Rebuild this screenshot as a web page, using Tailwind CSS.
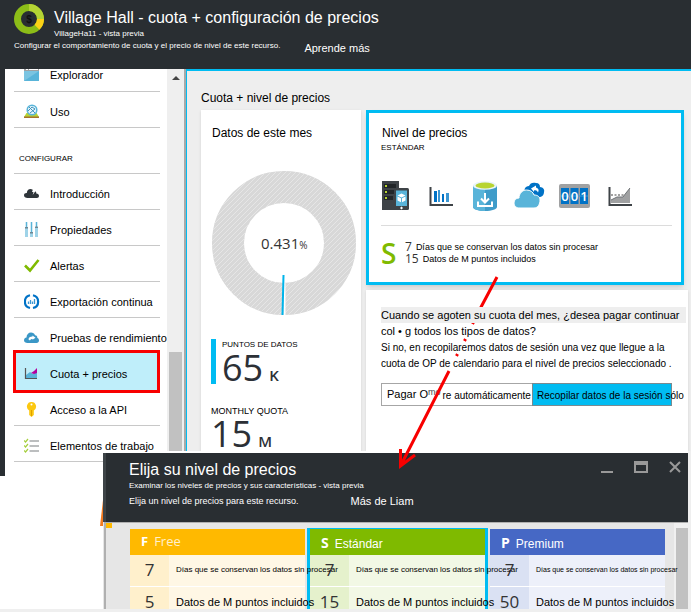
<!DOCTYPE html>
<html lang="es">
<head>
<meta charset="utf-8">
<title>Village Hall - cuota + configuración de precios</title>
<script src="https://cdn.jsdelivr.net/npm/@tailwindcss/browser@4"></script>
</head>
<body class="bg-white font-['Liberation_Sans',Arial,sans-serif] text-black">
<div class="relative flex min-h-screen flex-col overflow-hidden border-b-3 border-[#efefef]">

  <header class="flex h-[69px] items-start bg-[#292e32] pl-3.5 text-white">
    <div>
      <div class="flex gap-2.5">
        <svg class="mt-1 h-[30px] w-[30px]" viewBox="0 0 30 30" fill="none" stroke-width="7">
          <circle cx="15" cy="15" r="11.5" stroke="#8cbd18"/>
          <path d="M15 3.500A11.500 11.500 0 0 1 26.500 15" stroke="#b4d334"/>
          <path d="M26.500 15A11.500 11.500 0 0 1 23 23.300" stroke="#fcd116"/>
          <text x="15" y="18.500" text-anchor="middle" font-size="10" font-weight="700" fill="#111" stroke="none">$</text>
        </svg>
        <div>
          <h1 class="pt-2 text-[16px] leading-5 whitespace-nowrap">Village Hall - cuota + configuración de precios</h1>
          <p class="text-[8px] leading-3">VillageHa11 - vista previa</p>
        </div>
      </div>
      <div class="flex items-start">
        <p class="text-[8px] leading-3 whitespace-nowrap">Configurar el comportamiento de cuota y el precio de nivel de este recurso.</p>
        <a href="#" class="ml-6 text-[11px] leading-4 whitespace-nowrap">Aprende más</a>
      </div>
    </div>
  </header>

  <div class="flex items-start">
    <aside class="flex h-[407px] w-[187px] shrink-0 border-l-5 border-[#292e32]">
      <nav class="w-[162px] overflow-hidden pr-[7px] pl-[9px] text-[11px] leading-4 whitespace-nowrap">
        <a href="#" class="-mt-[13px] flex h-9 items-center gap-2.5 border-b border-[#c8c8c8] pt-0.5 pl-2.5">
          <svg class="h-4 w-4" viewBox="0 0 16 16"><path d="M0 0h15v14H0z" fill="#59b4d9"/><path d="M0 0h15v4H0z" fill="#a0a1a2"/><path d="M2 1h2v2H2zM5 1h9v2H5z" fill="#fff"/><path d="M0 4h15L0 14z" fill="#7bc4e1"/></svg>
          Explorador</a>
        <a href="#" class="flex h-9 items-center gap-2.5 border-b border-[#c8c8c8] pt-1 pl-2.5">
          <svg class="h-4 w-4" viewBox="0 0 16 16"><path d="M2.500 9h10L15 13H0z" fill="#b8d432"/><path d="M0 12.500h15V14H0z" fill="#a5752c"/><circle cx="8" cy="6" r="4.800" fill="#e6f4fa" stroke="#59b4d9" stroke-width="1.500"/><path d="M5 3l6 6M4 7l4-4 3 2-5 4" fill="none" stroke="#3f93bb"/></svg>
          Uso</a>
        <h2 class="flex h-[46px] items-end border-b border-[#c8c8c8] pb-2 pl-[5px] text-[8px] leading-3">CONFIGURAR</h2>
        <a href="#" class="flex h-9 items-center gap-2.5 border-b border-[#c8c8c8] pt-1 pl-2.5">
          <svg class="h-4 w-4" viewBox="0 0 16 16"><path d="M3.500 12C1.500 12 0 11 0 9.300 0 7.700 1.400 6.800 2.800 7 3 4.500 4.500 3 6.500 3 8 3 9 3.800 9.500 5c2.500-.3 3 1.500 2.800 2.500C14 7.500 15 8.500 15 10c0 1.200-1 2-2 2z" fill="#2f353a"/><path d="M9.500 2L8 6h1.500l-.8 3 2.800-4H10l1-3z" fill="#fff"/></svg>
          Introducción</a>
        <a href="#" class="flex h-9 items-center gap-2.5 border-b border-[#c8c8c8] pt-1 pl-2.5">
          <svg class="h-4 w-4" viewBox="0 0 16 16"><path d="M1 6h3v9H1zM6 10h3v5H6zM11 6h3v9h-3z" fill="#9fd3e8"/><path d="M1 0h3v5H1zM6 0h3v10H6zM11 0h3v4h-3z" fill="#d3ebf5"/><path d="M2 0h1v6H2zM7 0h1v10H7zM12 0h1v5h-1z" fill="#59b4d9"/><path d="M1 5h3v1.500H1zM6 10h3v1.500H6zM11 4.500h3V6h-3z" fill="#6d8793"/></svg>
          Propiedades</a>
        <a href="#" class="flex h-9 items-center gap-2.5 border-b border-[#c8c8c8] pt-1 pl-2.5">
          <svg class="h-4 w-4" viewBox="0 0 16 16"><path d="M1 7.500L6 12.500 14.500 2" fill="none" stroke="#7fba00" stroke-width="2.600"/></svg>
          Alertas</a>
        <a href="#" class="flex h-9 items-center gap-2.5 border-b border-[#c8c8c8] pt-1 pl-2.5">
          <svg class="h-4 w-4" viewBox="0 0 16 16" fill="none" stroke="#0072c6"><path d="M6 1.300A6.500 6.500 0 0 0 6 14M9 1.300A6.500 6.500 0 0 1 9 14" stroke-width="2.200"/><path d="M4.500 7.500v2.500M6.500 6v4M8.500 7.500v2.500M10.500 5v5" stroke="#3b97d3" stroke-width="1.300"/></svg>
          Exportación continua</a>
        <a href="#" class="flex h-9 items-center gap-2.5 border-b border-[#c8c8c8] pt-1 pl-2.5">
          <svg class="h-4 w-4 shrink-0" viewBox="0 0 16 16"><path d="M3.500 13C1.500 13 0 12 0 10.300 0 8.700 1.200 7.600 2.500 7.500 2.500 4.500 4.500 2.500 7 2.500c2 0 3.500 1 4 2.700 2 0 2.500 1.500 2.300 2.800C14.500 8.300 15 9.300 15 10.500c0 1.500-1 2.500-2.500 2.500z" fill="#3b97c6"/><path d="M4.500 9.500c0-2 1.500-3 4-3V5.500l3 2.300-3 2V9C7 9 6.500 9.500 6 10.500z" fill="#fff"/></svg>
          Pruebas de rendimiento</a>
        <a href="#" aria-current="page" class="relative -mt-1 -mb-[3px] -ml-px flex h-[43px] items-center gap-2.5 border-3 border-[#f80000] bg-[#bfeefa] pt-1 pl-2">
          <svg class="h-4 w-4" viewBox="0 0 16 16"><path d="M2 12V9l4-3 3 2 4-2v6z" fill="#59b4d9"/><path d="M7 7l3-2 3-3v5l-3 1z" fill="#b4009e"/><path d="M1.500 2v10.500H13" fill="none" stroke="#555" stroke-width="1.200"/></svg>
          Cuota + precios</a>
        <a href="#" class="flex h-9 items-center gap-2.5 border-b border-[#c8c8c8] pt-1 pl-2.5">
          <svg class="h-4 w-4" viewBox="0 0 16 16"><path d="M7.500 0a4.500 4.500 0 0 1 2.300 8.400V13l-2.300 2-2.300-2V8.400A4.500 4.500 0 0 1 7.500 0z" fill="#fcc810"/><circle cx="7.500" cy="2.500" r="1" fill="#fff"/><path d="M7.500 8v6" stroke="#dfa000"/></svg>
          Acceso a la API</a>
        <a href="#" class="flex h-9 items-center gap-2.5 border-b border-[#c8c8c8] pt-1 pl-2.5">
          <svg class="h-4 w-4" viewBox="0 0 16 16" fill="none"><path d="M5.500 3H15M5.500 8H15M5.500 13H15" stroke="#a6a9ab" stroke-width="1.300"/><path d="M0 2.500l1.500 1.500L4 1M0 7.500L1.500 9 4 6M0 12.500L1.500 14 4 11" stroke="#a5cf3d" stroke-width="1.200"/></svg>
          Elementos de trabajo</a>
      </nav>
      <div class="flex h-[382px] w-[17px] flex-col items-center bg-[#efefef]">
        <svg class="mt-1.5 h-1.5 w-2" viewBox="0 0 8 6"><path d="M0 5L4 1l4 4z" fill="#444"/></svg>
        <div class="mt-[271px] w-[13px] flex-1 bg-[#c1c1c1]"></div>
      </div>
      <div class="h-[382px] w-0.5 bg-[#a9a9a9]"></div>
      <div class="h-[382px] w-px bg-[#00bcf2]"></div>
    </aside>

    <main class="flex h-[382px] min-w-0 flex-1 flex-col overflow-hidden border-t-2 border-[#00bcf2] bg-[#eee] pr-[3px] pl-3.5">
      <h2 class="mt-[19px] mb-1 text-[12px] leading-4">Cuota + nivel de precios</h2>
      <div class="flex min-h-0 flex-1 gap-[5px]">
        <section class="w-40 shrink-0 bg-white px-2.5 shadow">
          <h3 class="pt-[15px] pl-px text-[12px] leading-4">Datos de este mes</h3>
          <svg class="mt-[30px] ml-px h-36 w-36" viewBox="0 0 144 144">
            <defs><pattern id="hatch" width="5" height="5" patternUnits="userSpaceOnUse"><path d="M-1 1l2-2M0 5L5 0M4 6l2-2" stroke="#e6e6e6"/></pattern></defs>
            <circle cx="72" cy="72" r="56" fill="none" stroke="#d8d8d8" stroke-width="32"/>
            <circle cx="72" cy="72" r="56" fill="none" stroke="url(#hatch)" stroke-width="32"/>
            <path d="M72.500 112v32" stroke="#fff" stroke-width="2"/>
            <path d="M71.500 104l-1 40" stroke="#00b4ea" stroke-width="2"/>
            <text x="49" y="78" font-family="Open Sans, sans-serif" font-size="15" font-weight="500" fill="#333">0.431<tspan font-size="10">%</tspan></text>
          </svg>
          <div class="mt-6 h-[45px] border-l-5 border-[#00bcf2] pl-1.5">
            <p class="text-[8px] leading-3">PUNTOS DE DATOS</p>
            <p class="flex items-baseline gap-1.5 font-['Open_Sans',sans-serif] text-[36px] leading-[34px] font-medium text-[#2c3036]">65 <span class="text-[15px] leading-4 font-semibold">K</span></p>
          </div>
          <div class="mt-[21px]">
            <p class="text-[9px] leading-3">MONTHLY QUOTA</p>
            <p class="flex items-baseline gap-1.5 font-['Open_Sans',sans-serif] text-[36px] leading-[34px] font-medium text-[#2c3036]">15 <span class="text-[15px] leading-4 font-semibold">M</span></p>
          </div>
        </section>

        <div class="flex min-w-0 flex-1 flex-col gap-[5px]">
          <section class="mr-1 h-[175px] shrink-0 border-3 border-[#00bcf2] bg-white pr-[9px] pl-3 shadow-md">
            <h3 class="pt-3 pl-px text-[12px] leading-4">Nivel de precios</h3>
            <p class="pt-px text-[8px] leading-3">ESTÁNDAR</p>
            <div class="mt-[26px] flex h-[31px] items-center">
              <svg class="h-[30px] w-[28px]" viewBox="0 0 28 30"><path d="M1 0h17v29H1z" fill="#3e4347"/><path d="M3 3h12v4H3zM3 9h12v4H3zM3 15h9v4H3z" fill="#222629"/><path d="M4 4h2v2H4zM4 10h2v2H4zM4 16h2v2H4z" fill="#b8d432"/><rect x="13" y="7" width="15" height="22" rx="1.500" fill="#3e4347"/><path d="M15 9.500h11V25H15z" fill="#59b4d9"/><path d="M20.500 12.500l4 2-4 2-4-2zM16.500 15.500l3.500 1.800v4l-3.500-1.800zM24.500 15.500L21 17.300v4l3.500-1.800z" fill="#fff"/><path d="M19 27h3M20.500 25.700v2.600" stroke="#fff"/></svg>
              <svg class="ml-5 h-[30px] w-[24px]" viewBox="0 0 24 30"><path d="M1.500 6v18H24" fill="none" stroke="#3e4347" stroke-width="2"/><path d="M5 10h3v11H5zM13 13h2v8h-2z" fill="#0072c6"/><path d="M9 9h2v12H9zM17 12h3v9h-3z" fill="#3b97d3"/></svg>
              <svg class="ml-5 h-[30px] w-[24px]" viewBox="0 0 24 30"><path d="M0 4v22c0 2 5 4 12 4s12-2 12-4V4z" fill="#3f9cc9"/><path d="M0 4v22c0 2 5 4 12 4V4z" fill="#59b4d9"/><ellipse cx="12" cy="4.500" rx="12" ry="4.300" fill="#eaf4f9"/><ellipse cx="12" cy="4.500" rx="9.500" ry="3" fill="#b8d432"/><path d="M12 12v9M8 17.500l4 4 4-4M5 20.500V25h14v-4.500" fill="none" stroke="#fff" stroke-width="2"/></svg>
              <svg class="ml-[17px] h-[30px] w-[31px]" viewBox="0 0 31 30"><path d="M12 13C9 9 11 5 15 5c1-3 4-4 7-3 3 0 4 2 4 4 3 0 5 3 4 5 0 3-2 5-5 5z" fill="#0072c6"/><path d="M17 7.500l5-3v2c3 1 3 3 2 5-1-2-2-2.500-4-2V11z" fill="#fff"/><path d="M6 27c-4 0-6-2-6-5s2-5 5-5c0-4 3-8 7.500-8 4 0 6.500 2 7.500 5 4 0 6 2 6 5 0 4-2 8-6 8z" fill="#59b4d9" stroke="#fff"/></svg>
              <svg class="ml-3.5 h-[30px] w-[31px]" viewBox="0 0 31 30"><rect y="3" width="31" height="24" rx="2" fill="#a0a1a2"/><path d="M2 7h8v16H2zM11.500 7h8v16h-8zM21 7h8v16h-8z" fill="#0072c6"/><path d="M2 15h27" stroke="#3b97d3"/><g font-family="Open Sans, sans-serif" font-size="13" font-weight="600" fill="#fff" text-anchor="middle"><text x="6" y="19.500">0</text><text x="15.500" y="19.500">0</text><text x="25" y="19.500">1</text></g></svg>
              <svg class="ml-[18px] h-[30px] w-[24px]" viewBox="0 0 24 30"><path d="M3 22v-3l6-3h6l3-4 4-5v15z" fill="#a0a1a2"/><path d="M3 19l6-3h6l3-4 4-5" fill="none" stroke="#6f7376"/><path d="M3 14h13" stroke="#444" stroke-dasharray="2 1.500"/><path d="M1.500 6v18H24" fill="none" stroke="#3e4347" stroke-width="2"/></svg>
            </div>
            <div class="mt-3.5 flex border-t border-[#dcdcdc] pt-[15px]">
              <span class="w-6 font-['Open_Sans',sans-serif] text-[28px] leading-6 font-semibold text-[#7fba00]">S</span>
              <ul class="text-[9px] leading-3 whitespace-nowrap">
                <li class="flex h-3 items-center gap-1"><span class="font-['Open_Sans',sans-serif] text-[12px] text-[#333]">7</span>Días que se conservan los datos sin procesar</li>
                <li class="flex h-3 items-center gap-1"><span class="font-['Open_Sans',sans-serif] text-[12px] text-[#333]">15</span>Datos de M puntos incluidos</li>
              </ul>
            </div>
          </section>

          <section class="min-h-0 flex-1 bg-white pt-[17px] pl-[15px] whitespace-nowrap shadow">
            <div class="relative z-20 text-[11px] leading-4">
              <p class="mr-0.5 bg-[#eee]">Cuando se agoten su cuota del mes, ¿desea pagar continuar</p>
              <p>col • g todos los tipos de datos?</p>
              <p class="text-[10px] leading-[17px]">Si no, en recopilaremos datos de sesión una vez que llegue a la</p>
              <p class="text-[10px]">cuota de OP de calendario para el nivel de precios seleccionado .</p>
            </div>
            <div class="mt-[11px] mr-4 flex h-[23px] text-[10px]">
              <button type="button" class="flex w-[151px] shrink-0 items-center border border-r-0 border-[#a6a6a6] pl-[5px]"><span class="text-[11px]">Pagar O</span><span class="mr-0.5 mb-1 text-[9px] text-[#444]">mo</span><span class="pt-0.5">re automáticamente</span></button>
              <button type="button" class="flex min-w-0 flex-1 items-center border border-[#7a8a90] bg-[#00bcf2] pt-0.5 pl-1">Recopilar datos de la sesión sólo</button>
            </div>
          </section>
        </div>
      </div>
    </main>
  </div>

  <!-- Orange edge behind the floating window -->
  <svg class="absolute top-[500px] left-[99px] h-[26px] w-1" viewBox="0 0 4 26"><path d="M4 0v26H1z" fill="#f47b20"/></svg>

  <!-- Floating tier picker -->
  <section class="absolute top-[453px] right-[3px] bottom-0 left-[103px] flex flex-col overflow-hidden bg-[#e6e6e6]">
    <header class="flex h-[69px] shrink-0 justify-between border-l-3 border-[#3d4347] bg-[#292e32] pr-[7px] pl-[23px] whitespace-nowrap text-white">
      <div>
        <h2 class="pt-[7px] text-[16px] leading-5">Elija su nivel de precios</h2>
        <p class="text-[8px] leading-3">Examinar los niveles de precios y sus características - vista previa</p>
        <div class="mt-px flex leading-4">
          <p class="text-[9px] leading-4">Elija un nivel de precios para este recurso.</p>
          <a href="#" class="ml-[52px] text-[11px]">Más de Liam</a>
        </div>
      </div>
      <div class="flex h-7 items-center gap-[21px] text-[#999]">
        <button type="button" aria-label="Minimizar"><svg class="h-3.5 w-3" viewBox="0 0 12 14"><path d="M0 11h12v2H0z" fill="currentColor"/></svg></button>
        <button type="button" aria-label="Maximizar"><svg class="h-3 w-3.5" viewBox="0 0 14 12"><path d="M0 0h14v12H0zM2 4v6h10V4z" fill="currentColor" fill-rule="evenodd"/></svg></button>
        <button type="button" aria-label="Cerrar"><svg class="h-3 w-3" viewBox="0 0 12 12"><path d="M1 1l10 10M11 1L1 11" stroke="currentColor" stroke-width="2"/></svg></button>
      </div>
    </header>
    <div class="ml-px flex min-h-0 flex-1 border-t border-l-2 border-[#b0b0b0]">
      <div class="h-[5px] w-1.5 shrink-0 bg-[#ffb900]"></div>
      <div class="relative z-10 grid min-w-0 flex-1 grid-cols-[175fr_181fr_175fr] gap-0.5 pt-[5px] pr-[9px] pl-[18px]">
        <article class="relative z-30 pt-px">
          <h3 class="flex h-[26px] items-center bg-[#ffb900] pl-[11px] font-['Open_Sans',sans-serif] text-[13px] text-[#fff0cc]"><b class="mr-1.5 text-white">F</b>Free</h3>
          <table class="w-full table-fixed whitespace-nowrap">
            <tr class="h-[31px] border-b border-white bg-[#fff7e5] text-[8px]"><th scope="row" class="w-[39px] bg-[#fff0cc] font-['Open_Sans',sans-serif] text-[17px] leading-5 font-normal text-[#333]">7</th><td class="pl-[7px]">Días que se conservan los datos sin procesar</td></tr>
            <tr class="h-[31px] bg-[#fff7e5] text-[11px]"><th scope="row" class="bg-[#fff0cc] font-['Open_Sans',sans-serif] text-[17px] leading-5 font-normal text-[#333]">5</th><td class="pl-[7px]">Datos de M puntos incluidos</td></tr>
          </table>
        </article>
        <article class="relative z-20 border-x-3 border-t border-[#00bcf2]">
          <h3 class="flex h-[26px] items-center bg-[#7fba00] pl-[11px] text-[12px] text-white"><b class="mr-1.5 font-['Open_Sans',sans-serif] text-[14px]">S</b><span class="pt-1">Estándar</span></h3>
          <table class="w-full table-fixed whitespace-nowrap">
            <tr class="h-[31px] border-b border-white bg-[#f2f8e5] text-[8px]"><th scope="row" class="w-[39px] bg-[#e5f1cc] font-['Open_Sans',sans-serif] text-[17px] leading-5 font-normal text-[#333]">7</th><td class="pl-[7px]">Días que se conservan los datos sin procesar</td></tr>
            <tr class="h-[31px] bg-[#f2f8e5] text-[11px]"><th scope="row" class="bg-[#e5f1cc] font-['Open_Sans',sans-serif] text-[17px] leading-5 font-normal text-[#333]">15</th><td class="pl-[7px]">Datos de M puntos incluidos</td></tr>
          </table>
        </article>
        <article class="relative z-10 pt-px">
          <h3 class="flex h-[26px] items-center bg-[#4668c5] pl-[11px] text-[12px] text-white"><b class="mr-1.5 font-['Open_Sans',sans-serif] text-[14px]">P</b><span class="pt-1">Premium</span></h3>
          <table class="w-full table-fixed whitespace-nowrap">
            <tr class="h-[31px] border-b border-white bg-[#edf0fa] text-[7px]"><th scope="row" class="w-[39px] bg-[#dae1f3] font-['Open_Sans',sans-serif] text-[17px] leading-5 font-normal text-[#333]">7</th><td class="pl-[7px]">Días que se conservan los datos sin procesar</td></tr>
            <tr class="h-[31px] bg-[#edf0fa] text-[11px]"><th scope="row" class="bg-[#dae1f3] font-['Open_Sans',sans-serif] text-[17px] leading-5 font-normal text-[#333]">50</th><td class="pl-[7px]">Datos de M puntos incluidos</td></tr>
          </table>
        </article>
      </div>
      <div class="w-3.5 bg-[#f0f0f0] pt-[5px] pl-0.5"><div class="h-full bg-[#c1c1c1]"></div></div>
    </div>
  </section>
  <div class="absolute top-[451px] right-0 bottom-0 w-[3px] bg-[#efefef]"></div>

  <!-- Arrow from the price card to the tier picker -->
  <svg class="pointer-events-none absolute top-[270px] left-[390px] h-[200px] w-[120px]" viewBox="0 0 120 200" fill="none" stroke="#f80000" stroke-width="3">
    <path d="M107 7L90 39M83.500 52l-1 2M75.500 69l-1 2M67.500 84l-1 2M59 101L11 195M10.500 179v17l14.500-11"/>
  </svg>
</div>
</body>
</html>
